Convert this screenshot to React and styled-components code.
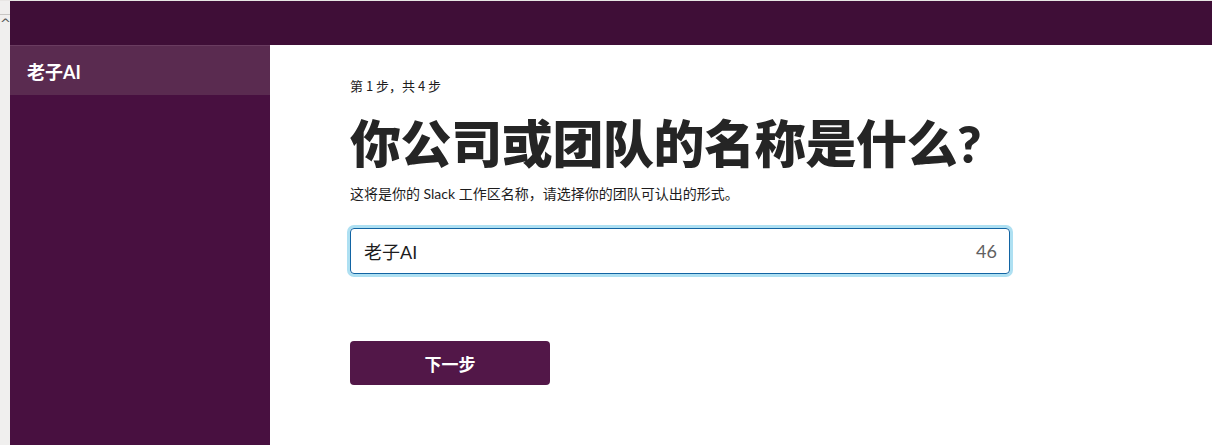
import React, { useState } from 'react';
import styled, { createGlobalStyle } from 'styled-components';

const GlobalStyle = createGlobalStyle`
  html, body {
    margin: 0;
    padding: 0;
    background: #ffffff;
    font-family: Lato, "Noto Sans CJK SC", sans-serif;
  }
`;

const Page = styled.div`
  display: flex;
  height: 445px;
  overflow: hidden;
  border-top: 1px solid #e8e6e4;
  box-sizing: border-box;
`;

const Gutter = styled.div`
  width: 10px;
  flex-shrink: 0;
  background: #f0efee;
  overflow: hidden;

  &::before {
    content: '';
    display: block;
    margin-top: 13px;
    height: 1px;
    background: #c8c6c4;
  }
`;

const Caret = styled.span`
  display: block;
  margin-top: 4px;
  color: #555;
  font-size: 13px;
  line-height: 10px;
  font-family: "DejaVu Sans", sans-serif;
`;

const Workspace = styled.div`
  flex: 1;
  display: flex;
  flex-direction: column;
`;

const TopBar = styled.div`
  height: 44px;
  background: #3f0e37;
  flex-shrink: 0;
`;

const Body = styled.div`
  flex: 1;
  display: flex;
`;

const Sidebar = styled.nav`
  width: 260px;
  flex-shrink: 0;
  background: #481040;
`;

const SidebarItem = styled.div`
  height: 50px;
  display: flex;
  align-items: center;
  padding-left: 17px;
  background: ${p => (p.active ? '#5a2b50' : 'transparent')};
  border-top: 1px solid #6a3c60;
  box-sizing: border-box;
  color: #ffffff;
  font-size: 18px;
  font-weight: 700;
  font-family: Lato, "Noto Sans CJK SC", sans-serif;
`;

const Main = styled.main`
  flex: 1;
  padding: 33px 0 0 80px;
  color: #1d1c1d;
`;

const Step = styled.div`
  font-size: 13px;
  line-height: 16px;
  color: #1d1c1d;
  font-family: "Noto Sans CJK SC", sans-serif;
`;

const Title = styled.h1`
  margin: 14px 0 0;
  font-size: 51px;
  line-height: 72px;
  font-weight: 800;
  letter-spacing: -0.4px;
  color: #252525;
  font-family: Lato, "Noto Sans CJK SC", sans-serif;
`;

const Subtitle = styled.p`
  margin: 3px 0 0;
  font-size: 14px;
  line-height: 22px;
  color: #1d1c1d;
`;

const InputBox = styled.label`
  margin: 23px 0 0;
  width: 660px;
  height: 46px;
  box-sizing: border-box;
  display: flex;
  align-items: center;
  border: 1px solid #1264a3;
  border-radius: 4px;
  box-shadow: 0 0 0 3px #aee0f2;
  padding: 0 12px 0 13px;
`;

const Field = styled.input`
  flex: 1;
  border: none;
  outline: none;
  padding: 0;
  font-size: 18px;
  color: #1d1c1d;
  font-family: Lato, "Noto Sans CJK SC", sans-serif;
  background: transparent;
`;

const Count = styled.span`
  font-size: 18px;
  color: #616061;
`;

const NextButton = styled.button`
  margin-top: 67px;
  width: 200px;
  height: 44px;
  border: none;
  border-radius: 4px;
  background: #521748;
  color: #ffffff;
  font-size: 17px;
  font-weight: 700;
  font-family: Lato, "Noto Sans CJK SC", sans-serif;
  cursor: pointer;
  display: block;
`;

export default function App() {
  const [name, setName] = useState('老子AI');

  return (
    <>
      <GlobalStyle />
      <Page>
        <Gutter>
          <Caret>^</Caret>
        </Gutter>
        <Workspace>
          <TopBar />
          <Body>
            <Sidebar>
              <SidebarItem active>{name}</SidebarItem>
            </Sidebar>
            <Main>
              <Step>第 1 步，共 4 步</Step>
              <Title>你公司或团队的名称是什么?</Title>
              <Subtitle>这将是你的 Slack 工作区名称，请选择你的团队可认出的形式。</Subtitle>
              <InputBox>
                <Field value={name} onChange={e => setName(e.target.value)} />
                <Count>{50 - name.length}</Count>
              </InputBox>
              <NextButton>下一步</NextButton>
            </Main>
          </Body>
        </Workspace>
      </Page>
    </>
  );
}
